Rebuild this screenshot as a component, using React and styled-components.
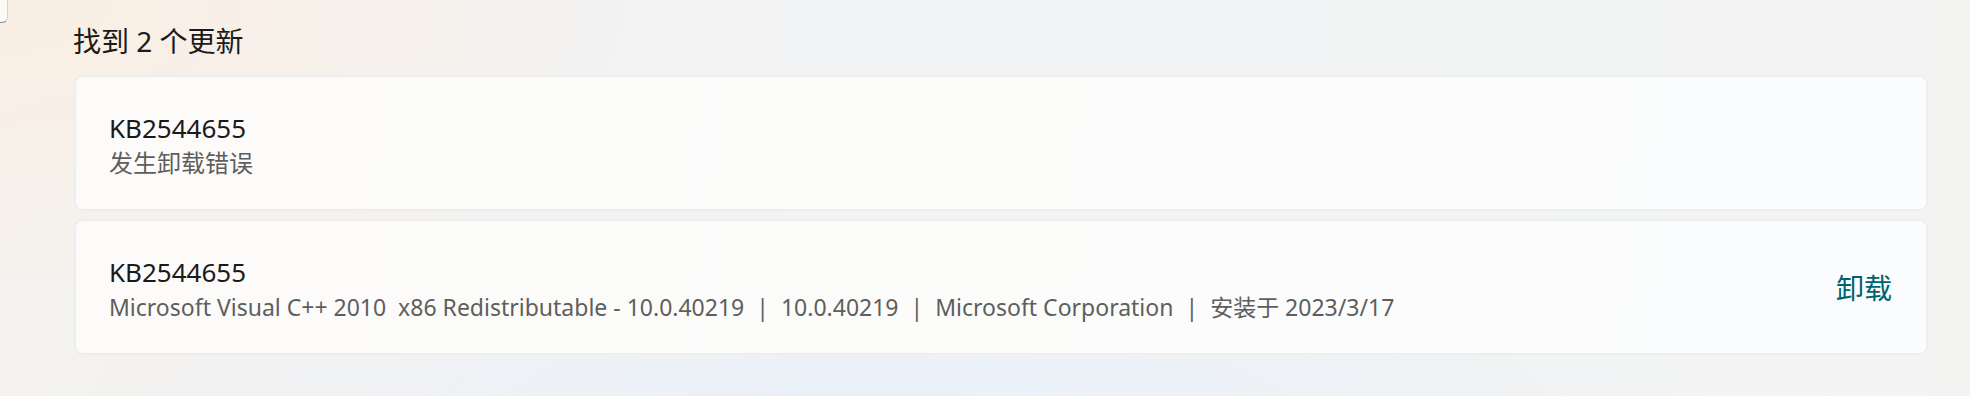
import React from "react";
import styled, { createGlobalStyle } from "styled-components";

const GlobalStyle = createGlobalStyle`
  html, body {
    margin: 0;
    padding: 0;
  }
  body {
    font-family: "Noto Sans", "Noto Sans CJK SC", sans-serif;
    color: #1b1b1b;
  }
`;

const Page = styled.div`
  width: 1970px;
  height: 396px;
  overflow: hidden;
  display: flex;
  flex-direction: column;
  background:
    radial-gradient(ellipse 900px 420px at 0% 0%, rgba(250, 238, 226, 0.95), rgba(250, 238, 226, 0) 70%),
    radial-gradient(ellipse 1100px 300px at 45% 110%, rgba(232, 240, 250, 0.9), rgba(232, 240, 250, 0) 75%),
    linear-gradient(90deg, #f5f2ef 0%, #f1f3f5 50%, #f3f4f2 100%);
`;

const Stub = styled.div`
  width: 7px;
  height: 22px;
  background: #fcfaf7;
  border-right: 1px solid #d6d2cc;
  border-bottom: 1px solid #8a8a8a;
  border-bottom-right-radius: 6px;
`;

const Content = styled.div`
  padding: 0 42px 0 74px;
  display: flex;
  flex-direction: column;
`;

const Heading = styled.h2`
  margin: 0 0 16px -1px;
  font-size: 28px;
  line-height: 36px;
  font-weight: 400;
  color: #1b1b1b;
  white-space: pre;
`;

const List = styled.div`
  display: flex;
  flex-direction: column;
  gap: 8px;
`;

const Card = styled.div`
  height: 136px;
  box-sizing: border-box;
  display: flex;
  align-items: center;
  justify-content: space-between;
  padding: 3px 34px 0 33px;
  background: linear-gradient(100deg, rgba(252, 251, 249, 0.97), rgba(251, 252, 253, 0.97));
  border: 2px solid rgba(0, 0, 0, 0.055);
  border-radius: 9px;
`;

const Info = styled.div`
  display: flex;
  flex-direction: column;
`;

const Title = styled.div`
  font-size: 26px;
  line-height: 36px;
  color: #1a1a1a;
`;

const Detail = styled.div`
  font-size: ${(p) => (p.$cjk ? "24px" : "23px")};
  line-height: 34px;
  color: #5e5e5e;
  white-space: pre;
`;

const Sep = styled.span`
  margin: 0 12px;
`;

const Action = styled.button`
  border: none;
  background: none;
  padding: 0;
  font-family: "Noto Sans CJK SC", sans-serif;
  font-size: 28px;
  line-height: 36px;
  color: #00626e;
  margin-top: -3px;
  cursor: pointer;
`;

const updates = [
  { id: "KB2544655", detail: ["发生卸载错误"], cjk: true, action: null },
  {
    id: "KB2544655",
    detail: [
      "Microsoft Visual C++ 2010  x86 Redistributable - 10.0.40219",
      "10.0.40219",
      "Microsoft Corporation",
      "安装于 2023/3/17",
    ],
    action: "卸载",
  },
];

export default function App() {
  return (
    <>
      <GlobalStyle />
      <Page>
        <Stub />
        <Content>
          <Heading>找到 2 个更新</Heading>
          <List>
            {updates.map((u, i) => (
              <Card key={i}>
                <Info>
                  <Title>{u.id}</Title>
                  <Detail $cjk={u.cjk}>
                    {u.detail.map((part, j) => (
                      <React.Fragment key={j}>
                        {j > 0 && <Sep>|</Sep>}
                        {part}
                      </React.Fragment>
                    ))}
                  </Detail>
                </Info>
                {u.action && <Action>{u.action}</Action>}
              </Card>
            ))}
          </List>
        </Content>
      </Page>
    </>
  );
}
